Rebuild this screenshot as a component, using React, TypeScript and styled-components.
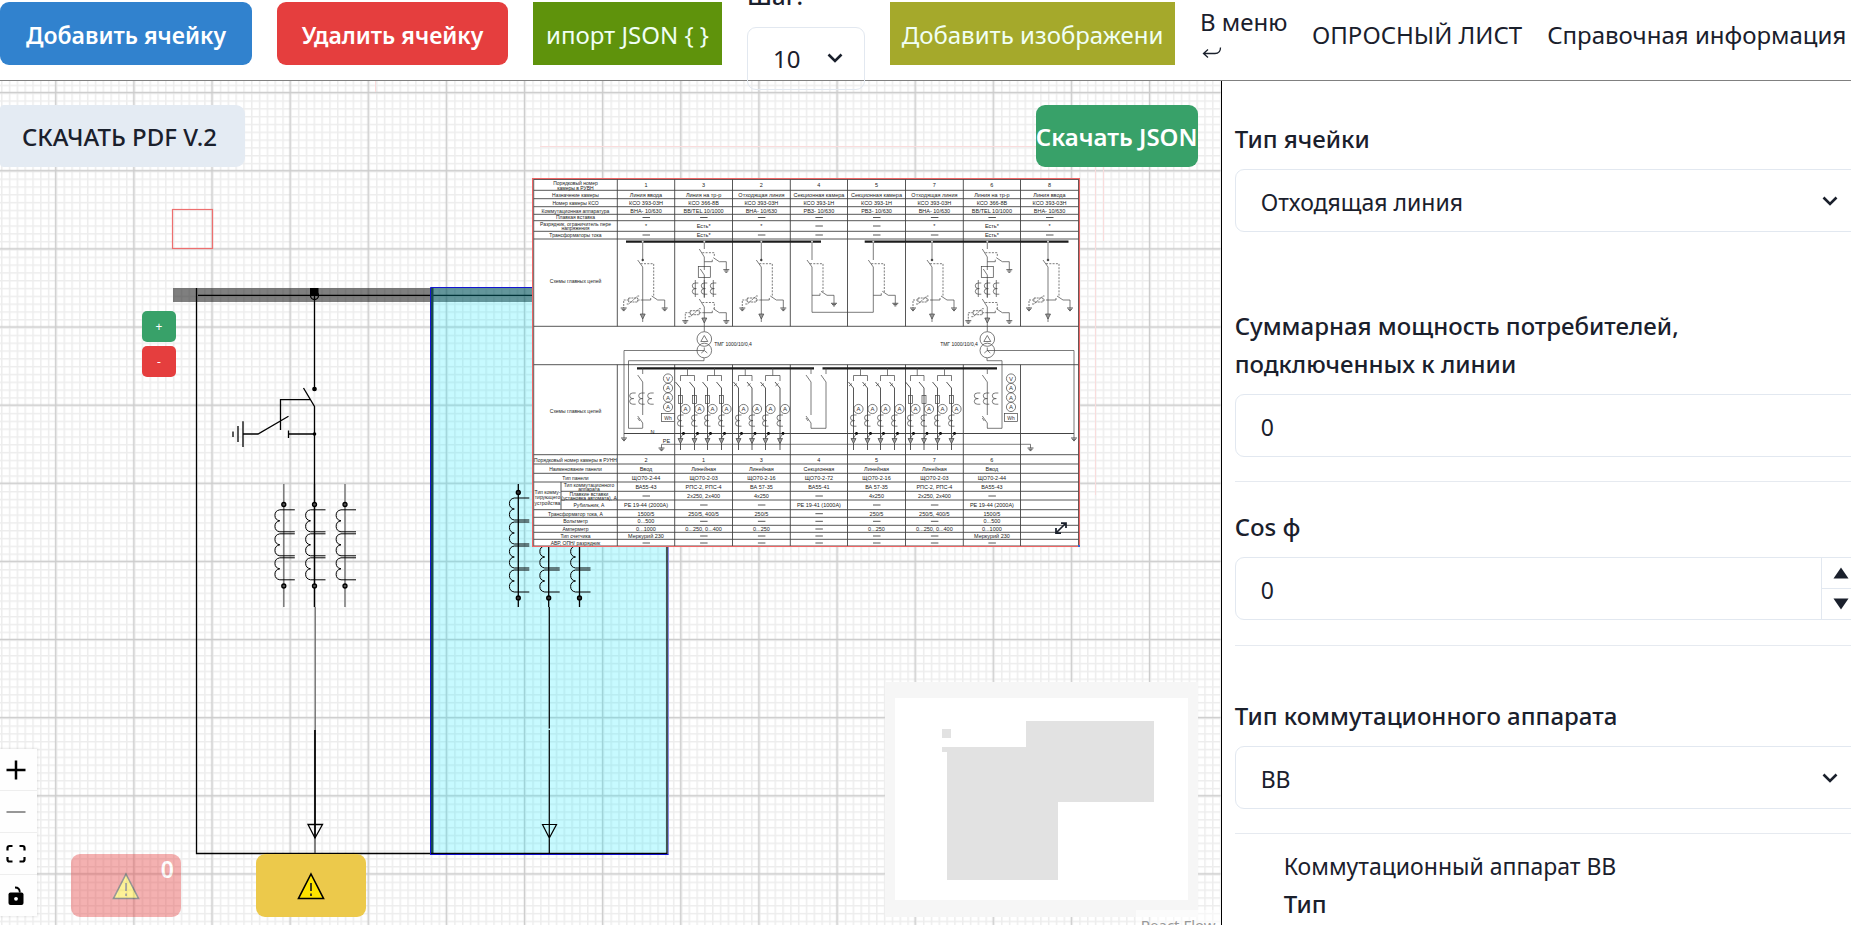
import React from 'react';
import styled, { createGlobalStyle } from 'styled-components';

const GlobalStyle = createGlobalStyle`
  *, *::before, *::after { box-sizing: border-box; }
  body {
    margin: 0;
    color: #1a202c;
    background: #fff;
    font-family: 'Noto Sans', 'Open Sans', sans-serif;
    font-size: 23px;
    line-height: 38px;
  }
  button, input, select { font: inherit; color: inherit; margin: 0; }
  button { border: 0; padding: 0; cursor: pointer; }
  a { color: inherit; text-decoration: none; }
`;

/* ---------- Page frame ---------- */

const Page = styled.div`
  display: flex;
  flex-direction: column;
  height: 100vh;
  overflow: hidden;
`;

const Header = styled.header`
  display: flex;
  align-items: center;
  gap: 25px;
  height: 81px;
  flex: none;
  padding: 2px 0 16px;
  border-bottom: 1px solid #808080;
  font-size: 24px;
  white-space: nowrap;
`;

const Workspace = styled.div`
  display: grid;
  grid-template-columns: calc(66% - 1px) minmax(0, 1fr);
  flex: 1;
  min-height: 0;
`;

/* ---------- Header parts ---------- */

const Button = styled.button<{ $bg: string; $width: number }>`
  flex: none;
  width: ${(p) => p.$width}px;
  height: 63px;
  padding-top: 3px;
  border-radius: 9px;
  background: ${(p) => p.$bg};
  color: #fff;
  font-size: 23px;
  font-weight: 600;
`;

const FileButton = styled.button<{ $bg: string; $width: number }>`
  flex: none;
  width: ${(p) => p.$width}px;
  height: 63px;
  padding-top: 3px;
  background: ${(p) => p.$bg};
  color: #f0fff4;
`;

const StepField = styled.div`
  display: flex;
  flex-direction: column;
  justify-content: center;
  gap: 12px;
  flex: none;
  width: 118px;
  height: 63px;
  position: relative;
  z-index: 2;
`;

const Label = styled.label`
  display: block;
  flex: none;
  font-size: 24px;
  font-weight: 500;
`;

const HeaderLink = styled.a`
  flex: none;
  padding-top: 3px;
`;

const MenuLink = styled(HeaderLink)`
  display: flex;
  flex-direction: column;
  width: 87px;
  padding-top: 0;
  line-height: 32px;

  svg { display: block; margin: 9px 0 2px 2px; }
`;

/* ---------- Form parts ---------- */

const SelectBox = styled.div`
  display: grid;
  flex: none;
  align-items: center;

  > * { grid-area: 1 / 1; }
  > svg { justify-self: end; margin-right: 20px; pointer-events: none; }
`;

const Select = styled.select`
  width: 100%;
  height: 63px;
  padding: 2px 25px 0;
  border: 1px solid #e2e8f0;
  border-radius: 9px;
  background: transparent;
  appearance: none;
  outline: none;
`;

const Input = styled.input`
  width: 100%;
  height: 63px;
  padding: 2px 25px 0;
  border: 1px solid #e2e8f0;
  border-radius: 9px;
  background: transparent;
  outline: none;
`;

const NumberBox = styled.div`
  display: grid;
  > * { grid-area: 1 / 1; }
`;

const Stepper = styled.div`
  display: flex;
  flex-direction: column;
  justify-self: end;
  width: 38px;
  margin: 1px;
  border-left: 1px solid #e2e8f0;
`;

const StepButton = styled.button`
  display: flex;
  flex: 1;
  align-items: center;
  justify-content: center;
  background: transparent;

  & + & { border-top: 1px solid #e2e8f0; }
`;

const Sidebar = styled.aside`
  min-width: 0;
  overflow: hidden;
  border-left: 1px solid #000;
  padding: 39px 0 0 13px;
`;

const Form = styled.form`
  display: flex;
  flex-direction: column;
  margin-right: -9px;
`;

const Field = styled.div<{ $after: number }>`
  display: flex;
  flex-direction: column;
  gap: 11px;
  margin-bottom: ${(p) => p.$after}px;
`;

const Divider = styled.hr<{ $after: number }>`
  width: 100%;
  height: 1px;
  margin: 0 0 ${(p) => p.$after}px;
  border: 0;
  background: #e6eaf0;
`;

const Details = styled.section`
  padding-left: 49px;
  line-height: 37px;
  p { margin: 0; }
`;

/* ---------- Canvas parts ---------- */

const Canvas = styled.main`
  position: relative;
  min-width: 0;
  overflow: hidden;
`;

const Scene = styled.svg`
  position: absolute;
  inset: 0;
  width: 100%;
  height: 100%;
`;

const PdfButton = styled.button`
  position: absolute;
  left: 0;
  top: 24px;
  height: 62px;
  width: 245px;
  padding: 2px 6px 0 0;
  border-radius: 4px 9px 9px 4px;
  background: #e4ebf3;
  font-size: 24px;
  font-weight: 500;
`;

const JsonButton = styled.button`
  position: absolute;
  right: 23px;
  top: 24px;
  width: 162px;
  height: 62px;
  padding-top: 2px;
  border-radius: 9px;
  background: #38a169;
  color: #fff;
  font-size: 24px;
  font-weight: 600;
  white-space: nowrap;
`;

const SizeButtons = styled.div`
  position: absolute;
  left: 142px;
  top: 230px;
  display: flex;
  flex-direction: column;
  gap: 4px;
`;

const SizeButton = styled.button<{ $bg: string }>`
  width: 34px;
  height: 31px;
  border-radius: 5px;
  background: ${(p) => p.$bg};
  color: #fff;
  font-size: 12px;
  line-height: 31px;
`;

const Controls = styled.div`
  position: absolute;
  left: 0;
  bottom: 9px;
  display: flex;
  flex-direction: column;
  width: 37px;
  background: #fefefe;
  box-shadow: 0 0 2px 1px rgba(0, 0, 0, 0.08);
`;

const ControlButton = styled.button`
  display: flex;
  align-items: center;
  justify-content: center;
  height: 42px;
  padding-right: 5px;
  border-bottom: 1px solid #eee;
  background: transparent;

  &:disabled svg { opacity: 0.4; }
  &:last-child { border-bottom: 0; height: 41px; }
`;

const Alerts = styled.div`
  position: absolute;
  left: 71px;
  bottom: 8px;
  display: flex;
  gap: 75px;
`;

const AlertButton = styled.button<{ $bg: string }>`
  display: grid;
  place-items: center;
  width: 110px;
  height: 63px;
  border-radius: 9px;
  background: ${(p) => p.$bg};

  > * { grid-area: 1 / 1; }
  &:disabled { opacity: 0.4; }
`;

const Count = styled.span`
  place-self: start end;
  margin-right: 7px;
  line-height: 30px;
  color: #fff;
  font-weight: 600;
`;

const MiniMap = styled.svg`
  position: absolute;
  right: 23px;
  bottom: 8px;
  width: 313px;
  height: 235px;
  background: #f6f6f6;
`;

const Attribution = styled.a`
  position: absolute;
  right: 0;
  bottom: -15px;
  padding: 0 5px;
  background: rgba(255, 255, 255, 0.5);
  color: #999;
  font-size: 15px;
  line-height: 30px;
`;

/* ---------- Icons ---------- */

const Chevron = () => (
  <svg width="20" height="20" viewBox="0 0 20 20" fill="none" stroke="#1a202c" strokeWidth="2.6" aria-hidden="true">
    <path d="M3.5 6.5 10 13 16.500 6.5" />
  </svg>
);

const Triangle = ({ down = false }: { down?: boolean }) => (
  <svg width="16" height="12" viewBox="0 0 16 12" fill="#1a202c" aria-hidden="true">
    <path d={down ? 'M0.500 0.500h15L8 11.500z' : 'M0.500 11.500h15L8 0.500z'} />
  </svg>
);

const ReturnArrow = () => (
  <svg width="20" height="12" viewBox="0 0 20 12" fill="none" stroke="#1a202c" strokeWidth="1.3" aria-hidden="true">
    <path d="M6 2.500 1.500 6.500 6 10.500M1.500 6.500H13Q18.500 6.500 18.500 0.500" />
  </svg>
);

const Warning = () => (
  <svg width="28" height="28" viewBox="0 0 28 28" aria-hidden="true">
    <path d="M14 2 26.500 26.500H1.500z" fill="#fde300" stroke="#000" strokeWidth="1.6" />
    <path d="M14 11v8M14 21.500v2.500" stroke="#222" strokeWidth="1.7" />
  </svg>
);

const FitIcon = () => (
  <svg width="20" height="20" viewBox="0 0 20 20" fill="none" stroke="#000" strokeWidth="2.200" aria-hidden="true">
    <path d="M1.500 6.500V4Q1.500 2 3.500 2H6.500M13.500 2H16.500Q18.500 2 18.500 4V6.500M18.500 13V15.500Q18.500 17.500 16.500 17.500H13.500M6.500 17.500H3.500Q1.500 17.500 1.500 15.500V13" />
  </svg>
);

const LockIcon = () => (
  <svg width="20" height="20" viewBox="0 0 20 20" aria-hidden="true">
    <rect x="2.500" y="6.500" width="15" height="12.500" rx="2" fill="#000" />
    <circle cx="10" cy="12.800" r="1.900" fill="#fff" />
    <path d="M9 1.500Q13.800 1.500 13.800 6.500" fill="none" stroke="#000" strokeWidth="1.800" />
  </svg>
);

/* ---------- Electrical symbols of the cell nodes ---------- */

const COIL = 24;

function Coils({ x, top, count, right }: { x: number; top: number; count: number; right: number }) {
  return (
    <>
      {Array.from({ length: count }, (_, i) => {
        const y = top + i * COIL;
        return (
          <path
            key={i}
            strokeWidth="1"
            d={`M${x + right} ${y}H${x - 4}A6 5.600 0 0 0 ${x - 4} ${y + 11}A6 5.600 0 0 0 ${x - 4} ${y + 22}H${x + right}`}
          />
        );
      })}
    </>
  );
}

function CurrentTransformer({ x, line }: { x: number; line: string }) {
  return (
    <g>
      <path d={`M${x} 484V607`} stroke={line} strokeWidth="1.500" />
      <Coils x={x} top={509.8} count={3} right={11} />
      <circle cx={x} cy="504.500" r="2" fill="#555" />
      <circle cx={x} cy="586" r="2" fill="#555" />
    </g>
  );
}

function LongTransformer({ x }: { x: number }) {
  return (
    <g>
      <path d={`M${x} 484V607`} />
      <Coils x={x} top={498} count={4} right={11} />
      <circle cx={x} cy="492.500" r="2" fill="#333" />
      <circle cx={x} cy="598" r="2" fill="#333" />
    </g>
  );
}

const Busbar = () => (
  <g>
    <rect x="173" y="288" width="427" height="14" fill="#000" opacity="0.500" />
    <path d="M198 295.300H600" stroke="#000" strokeWidth="1.300" />
  </g>
);

const FirstCell = () => (
  <g fill="none" stroke="#000" strokeWidth="1.300">
    <path d="M196.500 288V853.500H432" />
    <rect x="310" y="288" width="8.500" height="7.500" fill="#000" stroke="none" />
    <circle cx="314.500" cy="295.500" r="4" />
    <path d="M314.500 296V389M303.500 388 314.500 406.500V484" />
    <circle cx="314.500" cy="389" r="1.700" fill="#000" />
    <path d="M310 399.700H280.500V430M288.500 416.300 258 434H243M288.500 430.500V438M288.500 434H314.500" />
    <circle cx="314.500" cy="434" r="1.800" fill="#000" stroke="none" />
    <path d="M243 421.300V447M238 426V442M233 431.500V437" />
    <CurrentTransformer x={283.8} line="#777" />
    <CurrentTransformer x={314.5} line="#000" />
    <CurrentTransformer x={345} line="#777" />
    <path d="M315.200 607V730" stroke="#666" />
    <path d="M315 730V838" strokeWidth="1.800" />
    <path d="M315 838V853" stroke="#444" />
    <path d="M308 824.500H322.500L315 838z" />
  </g>
);

const SelectedCell = () => (
  <g fill="none" stroke="#000" strokeWidth="1.300">
    <rect x="430" y="287" width="238" height="567" fill="#00e8ff" fillOpacity="0.220" stroke="none" />
    <rect x="431" y="288" width="2.500" height="566" fill="#16484e" stroke="none" />
    <path d="M430.500 854.500V287.500H600" stroke="#1414d2" strokeWidth="1" />
    <path d="M668.500 288V854.500" stroke="#8c8ce6" strokeWidth="1" />
    <path d="M667 288V853.300H431" />
    <path d="M430 854.500H668.500" stroke="#1414d2" strokeWidth="1" />
    <LongTransformer x={518.3} />
    <LongTransformer x={548.7} />
    <LongTransformer x={579.5} />
    <path d="M549.300 607V728.500M549.300 730V853M542.500 824.500H556.500L549.300 838z" strokeWidth="1.200" />
  </g>
);

/* ---------- Imported single-line diagram ---------- */

const Earth = ({ x, y }: { x: number; y: number }) => (
  <path d={`M${x - 3} ${y}h6M${x - 2} ${y + 1.3}h4M${x - 1} ${y + 2.6}h2`} strokeWidth="0.900" />
);

const Arrow = ({ x, y }: { x: number; y: number }) => (
  <path d={`M${x - 2.5} ${y}h5L${x} ${y + 5}z`} fill="#999" />
);

function EarthSwitch({ x, y }: { x: number; y: number }) {
  return (
    <>
      <path d={`M${x} ${y}h8v-2M${x + 9} ${y - 4}l6 4h7v8`} />
      <Earth x={x + 22} y={y + 8} />
    </>
  );
}

function Arrester({ x, y }: { x: number; y: number }) {
  return (
    <>
      <path d={`M${x} ${y}h-5M${x - 14} ${y}h-5v8`} strokeDasharray="2 1" />
      <path d={`M${x - 14} ${y - 2}h9v4h-9zM${x - 16} ${y + 4}h2l9-8h2`} strokeDasharray="2 0.700" />
      <Earth x={x - 19} y={y + 8} />
    </>
  );
}

function FeederCell({ x }: { x: number }) {
  return (
    <g>
      <path d={`M${x} 242V261M${x - 5} 260L${x} 267V322`} />
      <path d={`M${x - 2} 263.700H${x + 11}V297`} strokeDasharray="2 1.300" />
      <circle cx={x} cy="260" r="0.900" fill="#333" />
      <EarthSwitch x={x} y={300} />
      <Arrester x={x} y={300} />
      <Arrow x={x} y={314} />
    </g>
  );
}

function SectionCell({ x }: { x: number }) {
  return (
    <g>
      <path d={`M${x} 242V260M${x - 5} 260L${x} 267V312.300`} />
      <path d={`M${x - 2} 263.700H${x + 11}V292`} strokeDasharray="2 1.300" />
      <EarthSwitch x={x} y={295.3} />
    </g>
  );
}

function SmallCoil({ x, y }: { x: number; y: number }) {
  return <path d={`M${x + 3} ${y}H${x}a3 2.800 0 0 0 0 5.600h1h-1a3 2.800 0 0 0 0 5.600h3`} />;
}

function TransformerCell({ x }: { x: number }) {
  return (
    <g>
      <path d={`M${x} 242V249M${x - 5} 249L${x} 257V281M${x} 281V298M${x - 5} 299L${x} 307V331.500`} />
      <path d={`M${x - 2} 252.700H${x + 10}V257M${x - 2} 302.500H${x + 10}V309`} strokeDasharray="2 1.300" />
      <EarthSwitch x={x} y={261.7} />
      <rect x={x - 6} y="266.500" width="12" height="11" fill="#fff" />
      <path d={`M${x - 4} 269L${x} 275V278M${x} 266V270`} />
      {[-9, 0, 9].map((dx) => (
        <g key={dx}>
          <path d={`M${x + dx} 280V297`} />
          <SmallCoil x={x + dx} y={283} />
        </g>
      ))}
      <EarthSwitch x={x} y={312.7} />
      <Arrester x={x} y={312.7} />
      <Arrow x={x} y={318} />
      <circle cx={x} cy="339" r="7.300" />
      <circle cx={x} cy="350.500" r="7.300" />
      <path d={`M${x - 3.500} 341.500h7l-3.500-6zM${x} 350.500v-3M${x} 350.500l-3 2.500M${x} 350.500l3 2.500`} />
    </g>
  );
}

function Meter({ x, y, letter }: { x: number; y: number; letter: string }) {
  return (
    <g>
      <circle cx={x} cy={y} r="4.600" fill="#fff" />
      <text x={x} y={y + 2} fontSize="6" textAnchor="middle" fill="#333" stroke="none">{letter}</text>
    </g>
  );
}

function IncomerPanel({ x, meters }: { x: number; meters: number }) {
  return (
    <g>
      <path d={`M${x} 368V374M${x - 5} 375L${x} 382V415M${x - 5} 416L${x} 423V428M${x - 5} 418l2 3`} />
      {[-9, 0, 9].map((dx) => <SmallCoil key={dx} x={x + dx - 1} y={393} />)}
      <Meter x={meters} y={378.5} letter="V" />
      <Meter x={meters} y={388} letter="A" />
      <Meter x={meters} y={397.500} letter="A" />
      <Meter x={meters} y={407} letter="A" />
      <rect x={meters - 6.500} y="413.500" width="13" height="8" fill="#fff" />
      <text x={meters} y="419.500" fontSize="5" textAnchor="middle" fill="#333" stroke="none">Wh</text>
    </g>
  );
}

function LinePanel({ xs, fused }: { xs: number[]; fused: boolean }) {
  return (
    <g>
      <path d={`M${xs[0]} 381V375.500H${xs[1]}V381M${(xs[0] + xs[1]) / 2} 368V375.500`} />
      <path d={`M${xs[2]} 381V375.500H${xs[3]}V381M${(xs[2] + xs[3]) / 2} 368V375.500`} />
      {xs.map((x) => (
        <g key={x}>
          <path d={`M${x - 5} 382L${x} 388V450`} strokeWidth="0.900" />
          {fused ? <rect x={x - 2} y="395.500" width="4" height="8" /> : <path d={`M${x - 4.500} 386l3-2.500`} />}
          <Meter x={x + 5} y={409} letter="A" />
          <SmallCoil x={x} y={415} />
          <circle cx={x + 3} cy="433.500" r="1.400" fill="#000" stroke="none" />
          <path d={`M${x} 438L${x + 3} 433.500`} />
          <Arrow x={x} y={438.5} />
        </g>
      ))}
    </g>
  );
}

const SectionPanel = () => (
  <path d="M811 368V374M806 375 811 382V415M806 416 811 423V428.300H826V382L821 375M826 368V374M806 418l2 3" />
);

const COLS = [533.7, 617.3, 674.7, 732.5, 790.3, 847.5, 905.5, 963.3, 1020.5, 1078.5];
const TOP_LINES = [179.5, 190.3, 198.7, 206.7, 214.3, 220.7, 231.3, 239, 326.3];
const BOTTOM_LINES = [364.7, 454.7, 464, 473.3, 482, 509.7, 517.3, 525.3, 532.3, 539.3, 546];
const INNER_LINES = [491.3, 500];

const D = '—';
const TOP_ROWS: [number, string[]][] = [
  [185, ['1', '3', '2', '4', '5', '7', '6', '8']],
  [194.5, ['Линия ввода', 'Линия на тр-р', 'Отходящая линия', 'Секционная камера', 'Секционная камера', 'Отходящая линия', 'Линия на тр-р', 'Линия ввода']],
  [202.7, ['КСО 393-03Н', 'КСО 366-8В', 'КСО 393-03Н', 'КСО 393-1Н', 'КСО 393-1Н', 'КСО 393-03Н', 'КСО 366-8В', 'КСО 393-03Н']],
  [210.5, ['ВНА- 10/630', 'ВВ/TEL 10/1000', 'ВНА- 10/630', 'РВЗ- 10/630', 'РВЗ- 10/630', 'ВНА- 10/630', 'ВВ/TEL 10/1000', 'ВНА- 10/630']],
  [217.500, [D, D, D, D, D, D, D, D]],
  [226, ['*', 'Есть*', '*', D, D, '*', 'Есть*', '*']],
  [235, [D, 'Есть*', D, D, D, D, 'Есть*', D]],
];
const BOTTOM_ROWS: [number, string[]][] = [
  [459.5, ['2', '1', '3', '4', '5', '7', '6']],
  [468.7, ['Ввод', 'Линейная', 'Линейная', 'Секционная', 'Линейная', 'Линейная', 'Ввод']],
  [477.7, ['ЩО70-2-44', 'ЩО70-2-03', 'ЩО70-2-16', 'ЩО70-2-72', 'ЩО70-2-16', 'ЩО70-2-03', 'ЩО70-2-44']],
  [487, ['ВА55-43', 'РПС-2, РПС-4', 'ВА 57-35', 'ВА55-41', 'ВА 57-35', 'РПС-2, РПС-4', 'ВА55-43']],
  [496, [D, '2x250, 2x400', '4x250', D, '4x250', '2x250, 2x400', D]],
  [505, ['РЕ 19-44 (2000А)', D, D, 'РЕ 19-41 (1000А)', D, D, 'РЕ 19-44 (2000А)']],
  [513.7, ['1500/5', '250/5, 400/5', '250/5', D, '250/5', '250/5, 400/5', '1500/5']],
  [521.3, ['0...500', D, D, D, D, D, '0...500']],
  [529, ['0...1000', '0...250, 0...400', '0...250', D, '0...250', '0...250, 0...400', '0...1000']],
  [536, ['Меркурий 230', D, D, D, D, D, 'Меркурий 230']],
  [543, [D, D, D, D, D, D, D]],
];
const ROW_LABELS: [number, number, string][] = [
  [575.5, 182.5, 'Порядковый номер'],
  [575.5, 187.5, 'камеры в РУВН'],
  [575.5, 194.5, 'Назначение камеры'],
  [575.5, 202.7, 'Номер камеры КСО'],
  [575.5, 210.5, 'Коммутационная аппаратура'],
  [575.5, 217.3, 'Плавкая вставка'],
  [575.5, 223.5, 'Разрядник, ограничитель пере'],
  [575.5, 228, 'напряжения'],
  [575.5, 235, 'Трансформаторы тока'],
  [575.5, 281, 'Схемы главных цепей'],
  [575.5, 410.500, 'Схемы главных цепей'],
  [575.5, 459.5, 'Порядковый номер камеры в РУНН'],
  [575.5, 468.5, 'Наименование панели'],
  [575.5, 477.700, 'Тип панели'],
  [547.5, 491.5, 'Тип комму-'],
  [547.5, 497, 'тирующего'],
  [547.5, 502.500, 'устройства'],
  [589, 484.7, 'Тип коммутационного'],
  [589, 489, 'аппарата'],
  [589, 493.7, 'Плавкие вставки'],
  [589, 498, '(установка автомата), А'],
  [589, 505, 'Рубильник, А'],
  [575.5, 513.5, 'Трансформатор тока, А'],
  [575.5, 521.3, 'Вольтметр'],
  [575.5, 529, 'Амперметр'],
  [575.5, 536, 'Тип счетчика'],
  [575.5, 543, 'АВР, ОПН/ разрядник'],
];

/* Captions are set on a grid twice as fine as the line work. */
const Caption = ({ x, y, size = 11, children }: { x: number; y: number; size?: number; children: React.ReactNode }) => (
  <text x={(x - 532) * 2} y={(y - 178) * 2 + 4} fontSize={size}>{children}</text>
);

/* An empty cell shows a long dash drawn as a stroke. */
const EmptyMark = ({ x, y }: { x: number; y: number }) => (
  <path d={`M${(x - 532) * 2 - 7} ${(y - 178) * 2}h15`} stroke="#444" strokeWidth="1.800" />
);

const SchemeText = styled.g`
  font-family: 'Liberation Sans', sans-serif;
  text-anchor: middle;
  fill: #222;
`;

const SchemeLines = styled.g`
  font-family: 'Liberation Sans', sans-serif;
  fill: none;
  stroke: #444;
  stroke-width: 0.7px;
`;

function SchemeImage() {
  const columns = COLS.map((x, i) =>
    i === 0 || i === COLS.length - 1 ? `M${x} 179V546` : `M${x} 179V326.300M${x} 364.700V546`,
  ).join('');
  const rows = [...TOP_LINES, ...BOTTOM_LINES].map((y) => `M533.700 ${y}H1078.500`).join('');
  return (
    <svg x="532" y="178" width="548" height="369" viewBox="0 0 1096 738">
      <rect width="1096" height="738" fill="#fff" />
      <SchemeLines transform="scale(2) translate(-532 -178)">
        <path d={columns + rows} strokeWidth="0.900" />
        <path d={INNER_LINES.map((y) => `M561 ${y}H1078.500`).join('') + 'M561 482V509.700'} strokeWidth="0.900" />
        <path d="M626 241.700H821M864.700 241.700H1068.500M637 368.300H814M822.500 368.300H997" stroke="#1c1c1c" strokeWidth="2.200" style={{ strokeWidth: 2.2 }} />
        {[642.7, 761.3, 932, 1048].map((x) => <FeederCell key={x} x={x} />)}
        {[704.3, 987.3].map((x) => <TransformerCell key={x} x={x} />)}
        {[812, 873.3].map((x) => <SectionCell key={x} x={x} />)}
        <path d="M812 312.300H873.300" />
        <path d="M704 350.500H624V438M704 358V360.700H628.500V428.300H642.700" />
        <path d="M987 350.500H1074V438M987 358V360.700H1002V428.300H987" />
        <path d="M624 433.500H1074" strokeWidth="1" />
        <path d="M661.500 448V444.300H1030.500V448" />
        <Earth x={624} y={438} />
        <Earth x={1074} y={438} />
        <Earth x={661.5} y={448} />
        <Earth x={1030.5} y={448} />
        <IncomerPanel x={642.7} meters={668} />
        <LinePanel xs={[680.5, 694.5, 707.5, 721.5]} fused />
        <LinePanel xs={[738.5, 752, 765.5, 780]} fused={false} />
        <SectionPanel />
        <LinePanel xs={[853.5, 867.5, 880.5, 894.5]} fused={false} />
        <LinePanel xs={[910.5, 924, 937.5, 951.5]} fused />
        <IncomerPanel x={987.3} meters={1011} />
        {[642.7, 704.3, 761.3, 812, 873.3, 932, 987.3, 1048].map((x) => (
          <circle key={x} cx={x} cy="241.700" r="1" fill="#ddd" stroke="none" />
        ))}
      </SchemeLines>
      <SchemeText>
        {ROW_LABELS.map(([x, y, t]) => <Caption key={`${y}${t}`} x={x} y={y} size={10}>{t}</Caption>)}
        {[...TOP_ROWS, ...BOTTOM_ROWS].map(([y, cells]) =>
          cells.map((t, i) => {
            const x = (COLS[i + 1] + COLS[i + 2]) / 2;
            return t === D
              ? <EmptyMark key={`${y}-${i}`} x={x} y={y} />
              : <Caption key={`${y}-${i}`} x={x} y={y}>{t}</Caption>;
          }),
        )}
        <Caption x={733} y={343.5} size={10}>ТМГ 1000/10/0,4</Caption>
        <Caption x={959} y={343.5} size={10}>ТМГ 1000/10/0,4</Caption>
        <Caption x={652.5} y={431.5}>N</Caption>
        <Caption x={666.5} y={441}>PE</Caption>
      </SchemeText>
      <rect x="1" y="1" width="1094" height="736" fill="none" stroke="#ee6565" strokeWidth="2.400" />
      <rect x="1092" y="734" width="4" height="4" fill="#3367d9" />
      <path d="M1050 708 1066 692M1058 690H1068V700M1048 700V710H1058" fill="none" stroke="#1a202c" strokeWidth="3.500" />
    </svg>
  );
}

/* ---------- Canvas scene ---------- */

function FlowScene() {
  return (
    <Scene aria-label="Схема">
      <defs>
        <pattern id="minor" width="7.813" height="7.813" x="55.700" y="11.500" patternUnits="userSpaceOnUse">
          <path d="M0 0H7.813M0 0V7.813" stroke="#ededed" strokeWidth="3" />
        </pattern>
        <pattern id="major" width="78.130" height="78.130" x="16.600" y="-27.500" patternUnits="userSpaceOnUse">
          <path d="M0 39.070H78.130M39.070 0V78.130" stroke="#ccc" strokeWidth="1.400" />
        </pattern>
      </defs>
      <rect width="100%" height="100%" fill="url(#minor)" />
      <rect width="100%" height="100%" fill="url(#major)" />
      <g transform="translate(0 -81)">
        <path d="M375.500 81V92M540 146.500H1036M1095.500 167V495M1103.500 167V241" stroke="#fadcdc" fill="none" />
        <rect x="172.500" y="209.500" width="40" height="39" fill="none" stroke="#ee6f6f" strokeWidth="1.200" />
        <Busbar />
        <FirstCell />
        <SelectedCell />
        <SchemeImage />
      </g>
    </Scene>
  );
}

export default function App() {
  return (
    <>
      <GlobalStyle />
      <Page>
        <Header>
          <Button $bg="#3182ce" $width={252}>Добавить ячейку</Button>
          <Button $bg="#e53e3e" $width={231}>Удалить ячейку</Button>
          <FileButton $bg="#5f930c" $width={189}>ипорт JSON {'{ }'}</FileButton>
          <StepField>
            <Label htmlFor="step">Шаг:</Label>
            <SelectBox>
              <Select id="step" defaultValue="10"><option>10</option></Select>
              <Chevron />
            </SelectBox>
          </StepField>
          <FileButton $bg="#a5a92b" $width={285}>Добавить изображени</FileButton>
          <MenuLink href="#menu">В меню<ReturnArrow /></MenuLink>
          <HeaderLink href="#survey">ОПРОСНЫЙ ЛИСТ</HeaderLink>
          <HeaderLink href="#help">Справочная информация</HeaderLink>
        </Header>
        <Workspace>
          <Canvas>
            <FlowScene />
            <PdfButton>СКАЧАТЬ PDF V.2</PdfButton>
            <JsonButton>Скачать JSON</JsonButton>
            <SizeButtons>
              <SizeButton $bg="#38a169">+</SizeButton>
              <SizeButton $bg="#e53e3e">-</SizeButton>
            </SizeButtons>
            <Controls>
              <ControlButton aria-label="Увеличить">
                <svg width="20" height="20" viewBox="0 0 20 20" stroke="#000" strokeWidth="2.500"><path d="M0.500 10h19M10 0.500v19" /></svg>
              </ControlButton>
              <ControlButton aria-label="Уменьшить" disabled>
                <svg width="20" height="20" viewBox="0 0 20 20" stroke="#000" strokeWidth="2"><path d="M0.500 10h19" /></svg>
              </ControlButton>
              <ControlButton aria-label="Показать всё"><FitIcon /></ControlButton>
              <ControlButton aria-label="Блокировка"><LockIcon /></ControlButton>
            </Controls>
            <Alerts>
              <AlertButton $bg="#e53e3e" disabled aria-label="Ошибки: 0"><Warning /><Count>0</Count></AlertButton>
              <AlertButton $bg="#ecc94b" aria-label="Предупреждения"><Warning /></AlertButton>
            </Alerts>
            <MiniMap viewBox="885 682 313 235">
              <rect x="895" y="698" width="293" height="202" fill="#fff" />
              <path d="M942 729h9v9h-9zM942 747h84v-26h128v81h-96v78h-111v-128h-5z" fill="#e2e2e2" />
            </MiniMap>
            <Attribution href="#react-flow">React Flow</Attribution>
          </Canvas>
          <Sidebar>
            <Form>
              <Field $after={75}>
                <Label htmlFor="cell-type">Тип ячейки</Label>
                <SelectBox>
                  <Select id="cell-type"><option>Отходящая линия</option></Select>
                  <Chevron />
                </SelectBox>
              </Field>
              <Field $after={24}>
                <Label htmlFor="power">Суммарная мощность потребителей,<br />подключенных к линии</Label>
                <Input id="power" defaultValue="0" />
              </Field>
              <Divider $after={26} />
              <Field $after={25}>
                <Label htmlFor="cos">Cos φ</Label>
                <NumberBox>
                  <Input id="cos" defaultValue="0" />
                  <Stepper>
                    <StepButton type="button" aria-label="Больше"><Triangle /></StepButton>
                    <StepButton type="button" aria-label="Меньше"><Triangle down /></StepButton>
                  </Stepper>
                </NumberBox>
              </Field>
              <Divider $after={51} />
              <Field $after={24}>
                <Label htmlFor="device">Тип коммутационного аппарата</Label>
                <SelectBox>
                  <Select id="device"><option>ВВ</option></Select>
                  <Chevron />
                </SelectBox>
              </Field>
              <Divider $after={14} />
              <Details>
                <p>Коммутационный аппарат ВВ</p>
                <Label as="p">Тип</Label>
              </Details>
            </Form>
          </Sidebar>
        </Workspace>
      </Page>
    </>
  );
}
